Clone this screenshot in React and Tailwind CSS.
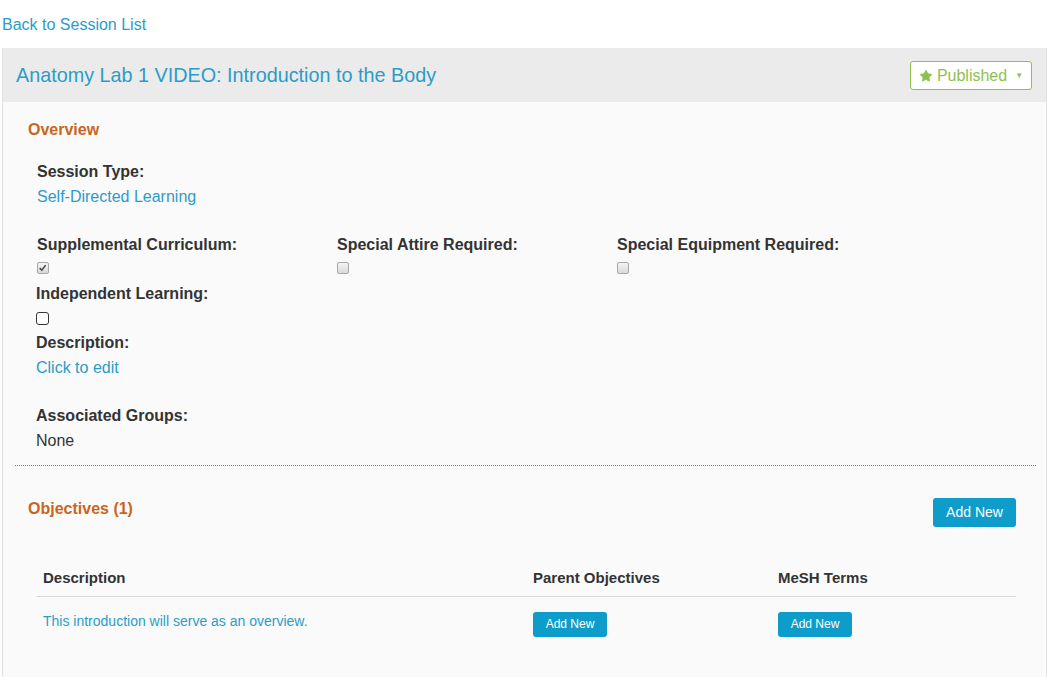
import React from 'react';
import { Star } from 'lucide-react';

const LINK = 'text-[#2b9cc9]';

const GrayBox = ({ checked }) => (
  <span className="block w-[12px] h-[12px] rounded-[2px] border border-[#a8a8a8] bg-gradient-to-b from-[#f4f4f4] to-[#d9d9d9] relative">
    {checked && (
      <svg viewBox="0 0 12 12" className="absolute inset-0 w-[10px] h-[10px]">
        <path d="M2 6.2 L4.6 8.6 L9.2 2.6" fill="none" stroke="#444" strokeWidth="1.8" />
      </svg>
    )}
  </span>
);

const Field = ({ label, children, className = '' }) => (
  <div className={className}>
    <div className="text-[16px] leading-[24px] font-bold text-[#333]">{label}</div>
    {children}
  </div>
);

const Btn = ({ small, children }) => (
  <button className={`bg-[#0e9dcb] text-white rounded-[3px] ${small ? 'text-[12px] h-[25px] w-[74px]' : 'text-[14px] h-[29px] w-[83px]'}`}>
    {children}
  </button>
);

export default function App() {
  return (
    <div className="min-h-[677px] bg-white font-['Liberation_Sans',Arial,sans-serif] text-[#333]">
      <div className="pt-[13px] pl-[2px] h-[48px]">
        <a className={`text-[16px] leading-[22px] ${LINK}`}>Back to Session List</a>
      </div>

      <div className="ml-[2px] w-[1045px] border-l border-r border-[#e2e2e2] bg-[#fafafa] min-h-[629px]">
        <div className="h-[54px] bg-[#ebebeb] flex items-center justify-between pl-[13px] pr-[14px]">
          <h1 className={`text-[19.8px] leading-[26px] ${LINK}`}>Anatomy Lab 1 VIDEO: Introduction to the Body</h1>
          <button className="mt-[1px] h-[29px] w-[122px] border border-[#8cc152] rounded-[3px] bg-white flex items-center justify-center gap-[4px] text-[16px] text-[#8cc152]">
            <Star size={14} fill="#8cc152" strokeWidth={1} />
            <span>Published</span>
            <span className="text-[8px] ml-[4px] text-[#8cc152]">▼</span>
          </button>
        </div>

        <div className="pt-[18px] px-[12px]">
          <div className="pl-[13px] text-[16px] leading-[20px] font-bold text-[#c8661e]">Overview</div>

          <div className="pl-[22px]">
            <Field label="Session Type:" className="mt-[20px]">
              <div className={`mt-[1px] text-[16px] leading-[24px] ${LINK}`}>Self-Directed Learning</div>
            </Field>

            <div className="mt-[24px] grid grid-cols-[300px_280px_1fr]">
              <Field label="Supplemental Curriculum:">
                <div className="mt-[5px]"><GrayBox checked /></div>
              </Field>
              <Field label="Special Attire Required:">
                <div className="mt-[5px]"><GrayBox /></div>
              </Field>
              <Field label="Special Equipment Required:">
                <div className="mt-[5px]"><GrayBox /></div>
              </Field>
            </div>
          </div>

          <div className="pl-[21px]">
            <Field label="Independent Learning:" className="mt-[8px]">
              <span className="mt-[6px] block w-[13px] h-[13px] rounded-[3px] border border-[#333] bg-white" />
            </Field>
            <Field label="Description:" className="mt-[6px]">
              <div className={`mt-[1px] text-[16px] leading-[24px] ${LINK}`}>Click to edit</div>
            </Field>
            <Field label="Associated Groups:" className="mt-[24px]">
              <div className="mt-[1px] text-[16px] leading-[24px] text-[#333]">None</div>
            </Field>
          </div>

          <div className="mt-[12px] w-[1021px] border-t border-dotted border-[#c0641c]" />

          <div className="mt-[32px] pl-[13px] w-[1001px] flex items-center justify-between">
            <div className="text-[16px] leading-[20px] font-bold text-[#c8661e] -mt-[7px]">Objectives (1)</div>
            <Btn>Add New</Btn>
          </div>

          <div className="mt-[41px] ml-[22px] w-[979px]">
            <div className="grid grid-cols-[490px_245px_1fr] text-[15px] font-bold text-[#333] border-b border-[#d8d8d8] pb-[8px]">
              <div className="pl-[6px] leading-[20px]">Description</div>
              <div className="pl-[6px] leading-[20px]">Parent Objectives</div>
              <div className="pl-[6px] leading-[20px]">MeSH Terms</div>
            </div>
            <div className="grid grid-cols-[490px_245px_1fr] items-start pt-[14px]">
              <div className={`pl-[6px] text-[14px] leading-[20px] ${LINK}`}>This introduction will serve as an overview.</div>
              <div className="pl-[6px]"><Btn small>Add New</Btn></div>
              <div className="pl-[6px]"><Btn small>Add New</Btn></div>
            </div>
          </div>
        </div>
      </div>
    </div>
  );
}
